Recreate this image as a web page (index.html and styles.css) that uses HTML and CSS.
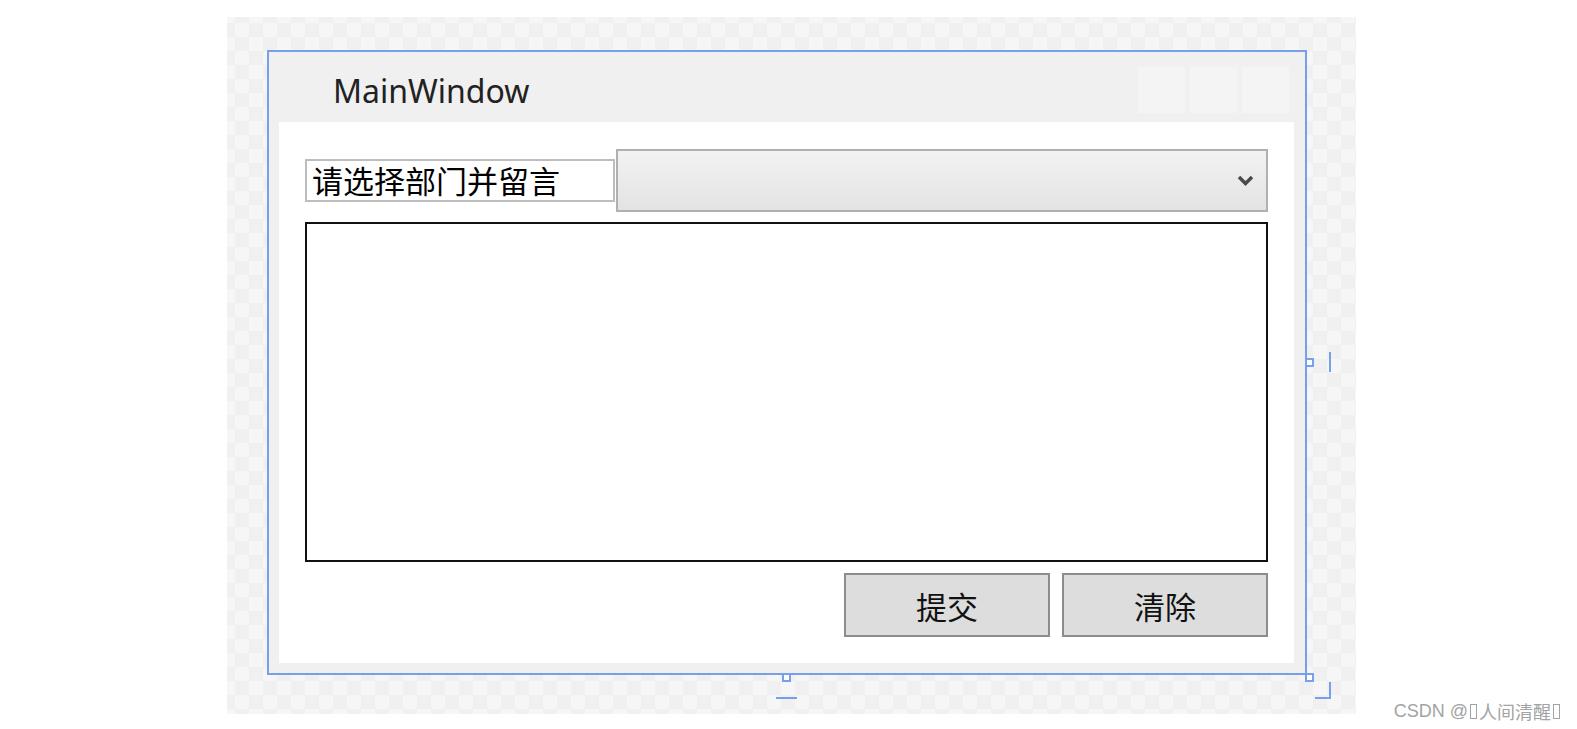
FILE: index.html
```html
<!DOCTYPE html>
<html lang="zh-CN">
<head>
  <meta charset="UTF-8" />
  <title>MainWindow</title>
  <link rel="stylesheet" href="styles.css">
</head>
<body>
  <div class="page">
    <div class="canvas">
      <div class="window">
        <div class="titlebar">
          <div class="title">MainWindow</div>
          <div class="caption-buttons">
            <div class="caption-btn"></div>
            <div class="caption-btn"></div>
            <div class="caption-btn"></div>
          </div>
        </div>
        <div class="client">
          <div class="top-row">
            <div class="label">请选择部门并留言</div>
            <div class="combo">
              <svg class="chevron" width="17" height="12" viewBox="0 0 17 12">
                <polyline points="2,2 8.5,8.5 15,2" fill="none" stroke="#4a4a4a" stroke-width="3.4"/>
              </svg>
            </div>
          </div>
          <div class="textbox"></div>
          <div class="button-row">
            <button class="btn">提交</button>
            <button class="btn">清除</button>
          </div>
        </div>
      </div>

      <!-- designer selection handles -->
      <div class="handle handle-right"></div>
      <div class="handle handle-bottom"></div>
      <div class="handle handle-corner"></div>
      <div class="grip grip-right"></div>
      <div class="grip grip-bottom"></div>
      <div class="grip-corner"></div>
    </div>
  </div>

  <div class="watermark">CSDN @<span class="tofu"></span>人间清醒<span class="tofu"></span></div>
</body>
</html>
```

FILE: styles.css
```css
/* Page & designer canvas */
body {
  margin: 0;
  background: #fff;
  font-family: "Noto Sans", "Noto Sans CJK SC", sans-serif;
  color: #111;
}
.page {
  padding: 17px 0 0 227px;
}
.canvas {
  position: relative;
  width: 1129px;
  height: 697px;
  box-sizing: border-box;
  padding: 33px 0 0 40px;
  background: repeating-conic-gradient(#f0f0f0 0 25%, #f6f6f6 0 50%) 8px 6px / 28px 28px;
}

/* Window frame */
.window {
  width: 1040px;
  height: 625px;
  box-sizing: border-box;
  border: 2px solid #76a0ec;
  background: #f0f0f0;
  padding: 0 11px 10px 10px;
  display: flex;
  flex-direction: column;
}
.titlebar {
  height: 70px;
  display: flex;
  justify-content: space-between;
  align-items: flex-start;
}
.title {
  padding: 17px 0 0 54px;
  font-size: 32px;
  line-height: 43px;
  color: #222;
}
.caption-buttons {
  display: flex;
  gap: 5px;
  margin: 15px 5px 0 0;
}
.caption-btn {
  width: 47px;
  height: 46px;
  background: #f4f4f4;
}

/* Client area */
.client {
  flex: 1;
  background: #fff;
  padding: 27px 26px 26px 26px;
  display: flex;
  flex-direction: column;
}
.top-row {
  display: flex;
  align-items: center;
}
.label {
  width: 310px;
  height: 43px;
  box-sizing: border-box;
  border: 2px solid #bdbdbd;
  padding-left: 5px;
  font-family: "Noto Sans CJK SC", sans-serif;
  font-size: 31px;
  line-height: 38px;
  color: #000;
}
.combo {
  flex: 1;
  height: 63px;
  margin-left: 1px;
  box-sizing: border-box;
  border: 2px solid #b0b0b0;
  background: linear-gradient(#f2f2f2, #e3e3e3);
  display: flex;
  align-items: center;
  justify-content: flex-end;
  padding-right: 12px;
}
.chevron {
  margin-top: 1px;
}
.textbox {
  height: 340px;
  margin-top: 10px;
  box-sizing: border-box;
  border: 2px solid #111;
  background: #fff;
}
.button-row {
  display: flex;
  justify-content: flex-end;
  gap: 12px;
  margin-top: 11px;
}
.btn {
  width: 206px;
  height: 64px;
  box-sizing: border-box;
  border: 2px solid #8c8c8c;
  background: #dddddd;
  font-family: "Noto Sans CJK SC", sans-serif;
  font-size: 31px;
  color: #111;
  padding: 0;
}

/* Selection handles drawn by the designer over the canvas */
.handle {
  position: absolute;
  width: 5px;
  height: 5px;
  border: 2px solid #76a0ec;
  background: #fff;
}
.handle-right { left: 1078px; top: 341px; }
.handle-bottom { left: 555px; top: 656px; }
.handle-corner { left: 1078px; top: 656px; }
.grip {
  position: absolute;
  background: #76a0ec;
}
.grip-right { left: 1102px; top: 335px; width: 2px; height: 20px; }
.grip-bottom { left: 549px; top: 680px; width: 21px; height: 2px; }
.grip-corner {
  position: absolute;
  left: 1088px;
  top: 665px;
  width: 14px;
  height: 15px;
  border-right: 2px solid #76a0ec;
  border-bottom: 2px solid #76a0ec;
}

/* Watermark */
.watermark {
  position: absolute;
  right: 15px;
  top: 698px;
  font-family: "Liberation Sans", "Noto Sans CJK SC", sans-serif;
  font-size: 18px;
  color: #a3a3a3;
  display: flex;
  align-items: center;
}
.tofu {
  display: inline-block;
  width: 5px;
  height: 13px;
  border: 1px solid #a3a3a3;
  margin: 0 2px;
}
```
